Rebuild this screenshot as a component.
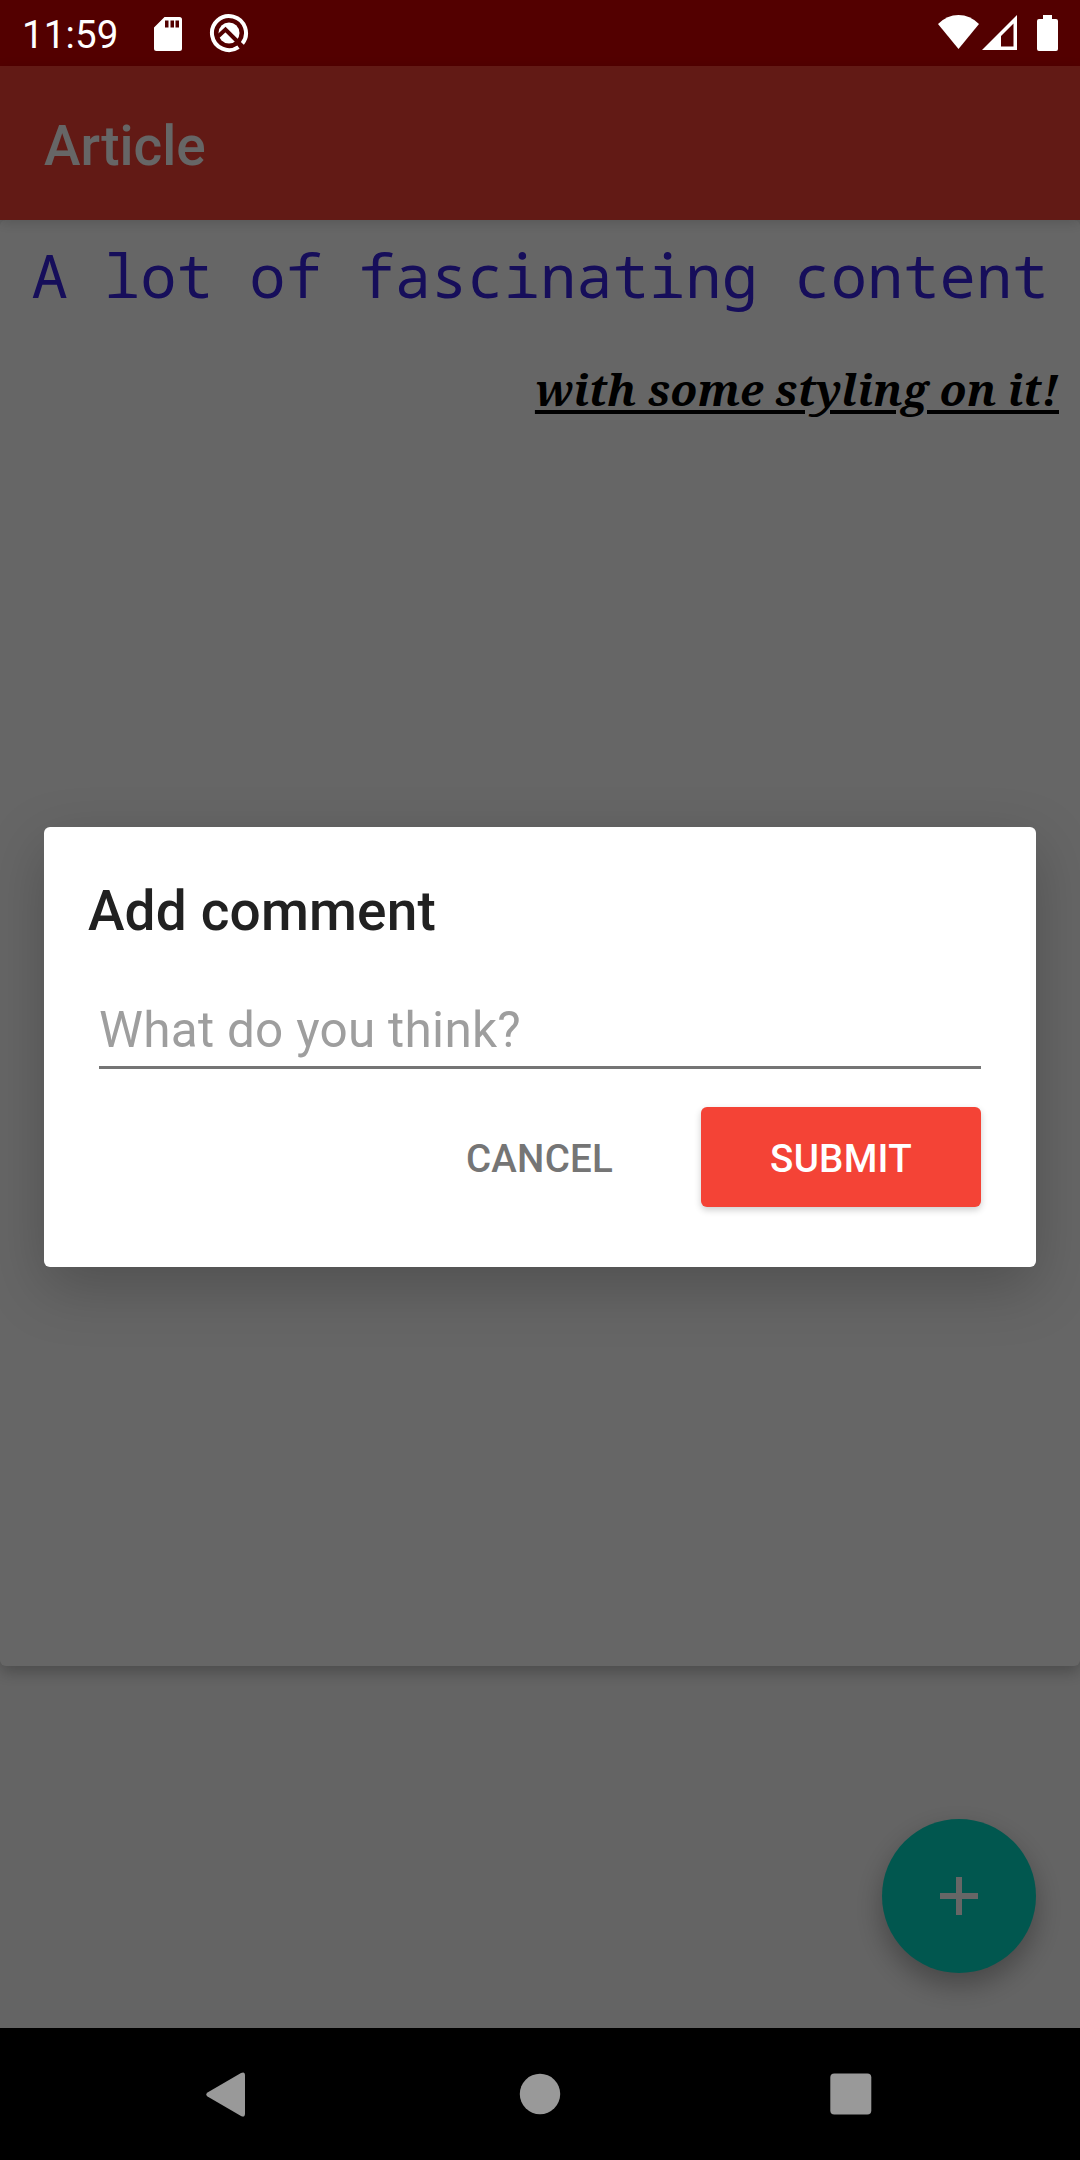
<div class="screen">
  <header class="status">
    <span class="time">11:59</span>
    <svg class="sd" viewBox="0 0 28 34"><path d="M10.500 0H25.500Q28 0 28 2.500V31.500Q28 34 25.500 34H2.500Q0 34 0 31.500V10.500ZM11 3.500V10.500H14.500V3.500ZM16.500 3.500V10.500H20V3.500ZM21.500 3.500V10.500H25V3.500Z" fill-rule="evenodd" /></svg>
    <svg class="q" viewBox="0 0 40 40">
      <path d="M33.200 30.700A17 17 0 1 0 29.500 34.100" class="ring" />
      <circle cx="20" cy="20" r="10.500" />
      <path d="M9 23.500L16.500 16.500L35 35" class="cut" />
    </svg>
    <span class="gap"></span>
    <svg class="wifi" viewBox="0 0 41 34"><path d="M0 9Q9 0 20.500 0Q32 0 41 9L20.500 34Z" /></svg>
    <svg class="signal" viewBox="0 0 35 35"><path d="M35 0V35H0ZM31.500 8.500L19 21V31.500H31.500Z" fill-rule="evenodd" /></svg>
    <svg class="battery" viewBox="0 0 21 36"><path d="M6 0H15V4H19Q21 4 21 6V34Q21 36 19 36H2Q0 36 0 34V6Q0 4 2 4H6Z" /></svg>
  </header>

  <main>
    <div class="appbar"><h1>Article</h1></div>
    <article>
      <p class="lead">A lot of fascinating content</p>
      <p class="styled">with some styling on it!</p>
    </article>
    <div class="below">
      <button class="fab" aria-label="Add"><svg viewBox="0 0 38 38"><path d="M16 0H22V16H38V22H22V38H16V22H0V16H16Z" /></svg></button>
    </div>
    <div class="scrim">
      <section class="dialog" role="dialog" aria-label="Add comment">
        <h2>Add comment</h2>
        <input placeholder="What do you think?" />
        <div class="actions">
          <button class="cancel">CANCEL</button>
          <button class="submit">SUBMIT</button>
        </div>
      </section>
    </div>
  </main>

  <nav>
    <svg viewBox="0 0 46 46"><path d="M1.500 21.500Q-1 23.500 1.500 25.500L35 45Q39 47 39 42.500V4.500Q39 0 35 2Z" /></svg>
    <svg viewBox="0 0 46 46"><circle cx="23" cy="23" r="20.200" /></svg>
    <svg viewBox="0 0 46 46"><rect x="2.300" y="2.500" width="41" height="41" rx="4" /></svg>
  </nav>
</div>

<style>
  :global(body) { margin: 0; }
  .screen { width: 1080px; height: 2160px; display: flex; flex-direction: column; overflow: hidden; font-family: Roboto, sans-serif; background: #fafafa; }
  h1, h2, p { margin: 0; }
  button { border: 0; padding: 0; font-family: inherit; }
  .status { box-sizing: border-box; height: 66px; background: #530000; display: flex; align-items: flex-start; padding: 0 22px; color: #fff; }
  .status svg { fill: #fff; flex: none; }
  .time { font-size: 38.500px; line-height: 66px; width: 132px; margin-top: 2px; letter-spacing: .1px; }
  .sd { width: 28px; height: 34px; margin: 16.500px 0 0 .4px; }
  .q { width: 40px; height: 40px; margin: 13px 0 0 27px; }
  .ring { fill: none; stroke: #fff; stroke-width: 4; }
  .cut { fill: none; stroke: #530000; stroke-width: 4; }
  .gap { flex: 1; }
  .wifi { width: 41px; height: 34px; margin-top: 15px; }
  .signal { width: 35px; height: 35px; margin: 15px 20px 0 3px; }
  .battery { width: 21px; height: 36px; margin-top: 15px; }

  main { position: relative; flex: 1; display: flex; flex-direction: column; min-height: 0; }
  .appbar { height: 154px; background: #f44336; padding-left: 44px; box-sizing: border-box; z-index: 1; box-shadow: 0 3px 12px rgba(0, 0, 0, .15); }
  h1 { color: #fff; font-size: 55px; font-weight: 500; line-height: 160px; }
  article { height: 1446px; background: #fff; border-radius: 6px; box-shadow: 0 6px 16px rgba(0, 0, 0, .25); }
  .lead { padding-top: 17px; text-align: center; font: 60.500px/76px "Noto Sans Mono", "Droid Sans Mono", "DejaVu Sans Mono", monospace; letter-spacing: .03px; color: #3823e2; white-space: nowrap; }
  .styled { margin-top: 46px; padding-right: 21px; text-align: right; font: italic bold 44px/60px "Noto Serif", "Droid Serif", "DejaVu Serif", serif; color: #000; text-decoration: underline; text-decoration-thickness: 4px; text-underline-offset: 4px; }
  .below { flex: 1; display: flex; justify-content: flex-end; align-items: flex-end; padding: 0 44px 55px 0; }
  .fab { width: 154px; height: 154px; border-radius: 50%; background: #03dac5; display: grid; place-items: center; box-shadow: 0 12px 28px rgba(0, 0, 0, .3); }
  .fab svg { width: 38px; height: 38px; fill: #fff; }

  .scrim { position: absolute; inset: 0; z-index: 2; background: rgba(0, 0, 0, .6); display: grid; place-items: center; }
  .dialog { box-sizing: border-box; width: 992px; height: 440px; background: #fff; border-radius: 6px; padding: 44px 55px 0 44px; box-shadow: 0 20px 60px rgba(0, 0, 0, .22); }
  h2 { font-size: 55px; line-height: 80px; font-weight: 500; color: #212121; letter-spacing: .15px; }
  input { display: block; box-sizing: border-box; width: 882px; height: 76px; margin: 42px 0 0 11px; padding: 0; border: 0; border-bottom: 3px solid #757575; font: 49.500px/70px Roboto, sans-serif; letter-spacing: .27px; outline: 0; background: none; }
  input::placeholder { color: #9e9e9e; opacity: 1; }
  .actions { display: flex; justify-content: flex-end; margin-top: 38px; }
  .actions button { height: 100px; padding-top: 2px; font-size: 38.500px; font-weight: 500; border-radius: 6px; letter-spacing: .25px; }
  .cancel { width: 279px; margin-right: 22px; background: none; color: #757575; }
  .submit { width: 280px; background: #f44336; color: #fff; box-shadow: 0 3px 7px rgba(0, 0, 0, .2); }

  nav { height: 132px; background: #000; display: flex; justify-content: space-between; padding: 0 206px; align-items: center; }
  nav svg { width: 46px; height: 46px; fill: #999; }
</style>
